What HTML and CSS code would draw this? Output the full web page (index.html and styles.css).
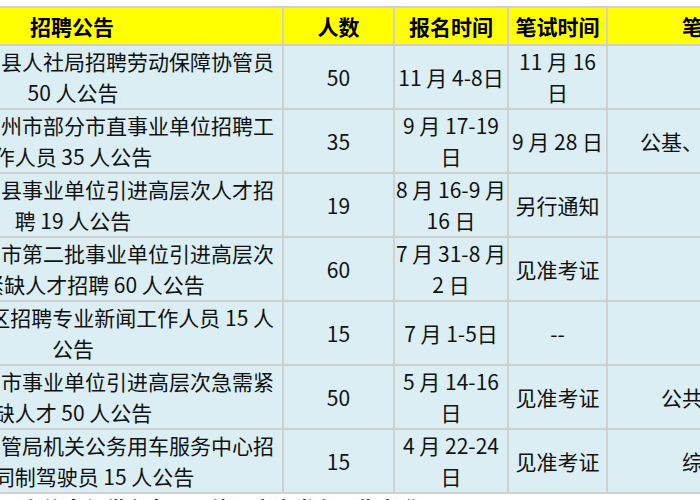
FILE: index.html
```html
<!DOCTYPE html>
<html lang="zh-CN">
<head>
<meta charset="utf-8">
<title>招聘公告</title>
<link rel="stylesheet" href="styles.css">
</head>
<body>
<table class="sheet">
  <colgroup>
    <col class="c-title">
    <col class="c-num">
    <col class="c-apply">
    <col class="c-exam">
    <col class="c-subject">
  </colgroup>
  <thead>
    <tr>
      <th>招聘公告</th>
      <th>人数</th>
      <th>报名时间</th>
      <th>笔试时间</th>
      <th>笔试科目</th>
    </tr>
  </thead>
  <tbody>
    <tr>
      <td class="title"><div class="lead">县人社局招聘劳动保障协管员</div><div>50 人公告</div></td>
      <td>50</td>
      <td>11 月 4-8日</td>
      <td>11 月 16<br>日</td>
      <td></td>
    </tr>
    <tr>
      <td class="title"><div class="lead">州市部分市直事业单位招聘工</div><div>作人员 35 人公告</div></td>
      <td>35</td>
      <td>9 月 17-19<br>日</td>
      <td>9 月 28 日</td>
      <td>公基、职测、申论</td>
    </tr>
    <tr>
      <td class="title"><div class="lead">县事业单位引进高层次人才招</div><div>聘 19 人公告</div></td>
      <td>19</td>
      <td>8 月 16-9 月<br>16 日</td>
      <td>另行通知</td>
      <td></td>
    </tr>
    <tr>
      <td class="title"><div class="lead">市第二批事业单位引进高层次</div><div>急需紧缺人才招聘 60 人公告</div></td>
      <td>60</td>
      <td>7 月 31-8 月<br>2 日</td>
      <td>见准考证</td>
      <td></td>
    </tr>
    <tr>
      <td class="title"><div class="lead">区招聘专业新闻工作人员 15 人</div><div>公告</div></td>
      <td>15</td>
      <td>7 月 1-5日</td>
      <td>--</td>
      <td></td>
    </tr>
    <tr>
      <td class="title"><div class="lead">市事业单位引进高层次急需紧</div><div>缺人才 50 人公告</div></td>
      <td>50</td>
      <td>5 月 14-16<br>日</td>
      <td>见准考证</td>
      <td>公共基础知识</td>
    </tr>
    <tr>
      <td class="title"><div class="lead">管局机关公务用车服务中心招</div><div>聘合同制驾驶员 15 人公告</div></td>
      <td>15</td>
      <td>4 月 22-24<br>日</td>
      <td>见准考证</td>
      <td>综合知识</td>
    </tr>
  </tbody>
</table>
<p class="note">以上信息仅供参考，具体以官方发布公告为准</p>
</body>
</html>
```

FILE: styles.css
```css
html, body {
  margin: 0;
  padding: 0;
  overflow: hidden;
  background: #ffffff;
}

body {
  font-family: "Noto Sans CJK SC", "Noto Sans", sans-serif;
  color: #111111;
}

.sheet {
  border-collapse: collapse;
  table-layout: fixed;
  width: 980px;
  margin: 6px 0 0 -140px;
  font-size: 21px;
}

.c-title { width: 422px; }
.c-num { width: 111px; }
.c-apply { width: 114px; }
.c-exam { width: 99px; }
.c-subject { width: 234px; }

.sheet th,
.sheet td {
  border: 2px solid #d0d0d0;
  padding: 0;
  text-align: center;
  vertical-align: middle;
  white-space: nowrap;
  overflow: hidden;
}

.sheet thead th {
  background: #ffff00;
  height: 36px;
  line-height: 36px;
  font-weight: bold;
  color: #000000;
}

.sheet tbody td {
  background: #daeef3;
  height: 62px;
  line-height: 31px;
}

.sheet td.title {
  padding: 0 8px 0 10px;
}

.lead {
  text-align: right;
}

.note {
  margin: 0;
  padding-top: 2px;
  font-size: 21px;
  line-height: 24px;
  font-weight: bold;
  color: #000000;
  white-space: nowrap;
}
```
